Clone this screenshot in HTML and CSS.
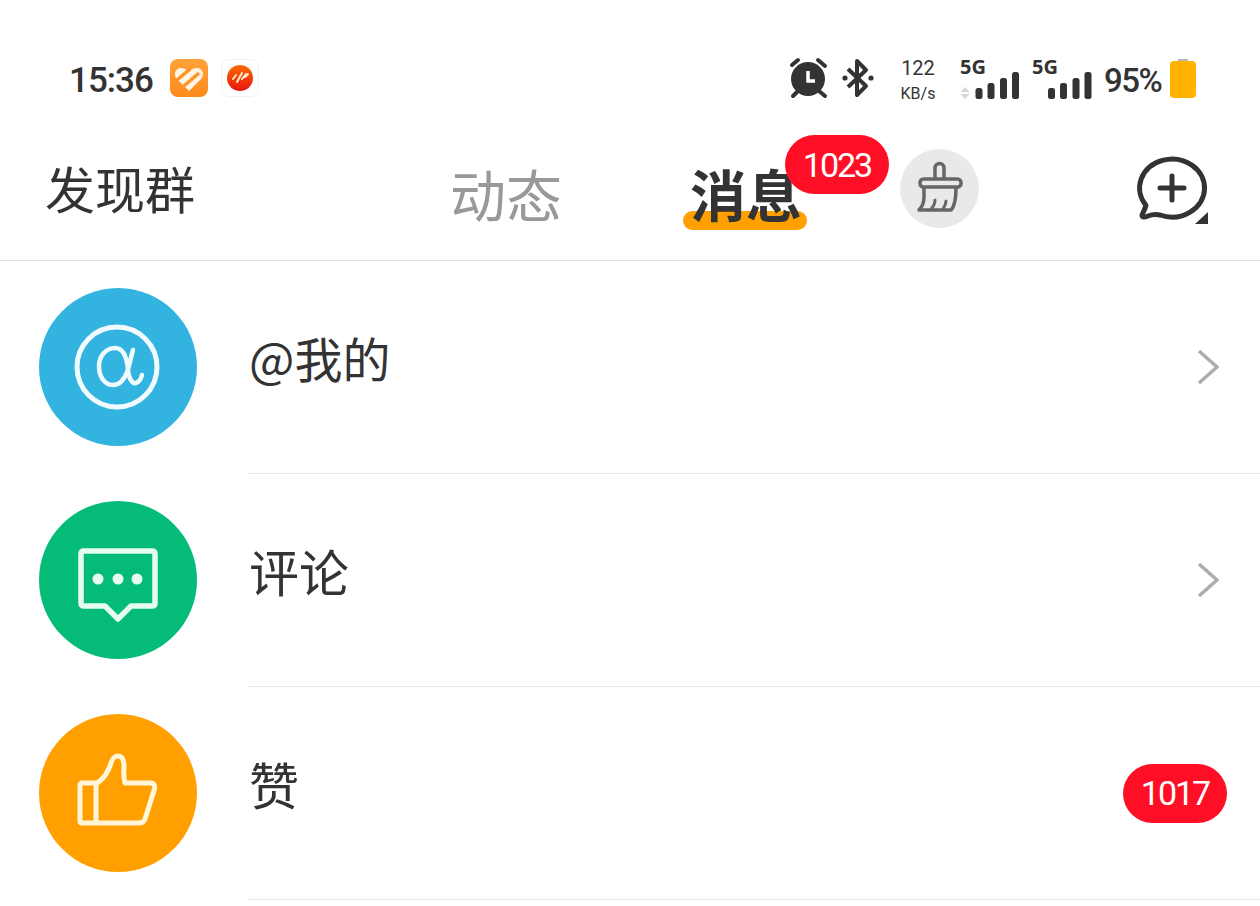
FILE: index.html
```html
<!DOCTYPE html>
<html lang="zh-CN">
<head>
    <meta charset="UTF-8">
    <meta name="viewport" content="width=device-width, initial-scale=1.0">
    <title>消息</title>
    <link rel="stylesheet" href="styles.css">
</head>
<body>
    <div class="status-bar">
        <span class="time">15:36</span>
        <div class="app-icon app-orange">
            <svg width="38" height="38" viewBox="0 0 38 38">
                <path d="M19 32 L7 20 C3 16 5 9 11 9 C14 9 17 10 19 13 C21 10 24 9 27 9 C33 9 35 16 31 20 Z" fill="#fff3e4"/>
                <path d="M7 21 L20 10 M14 27 L29 14" stroke="#ff9426" stroke-width="3.5" fill="none"/>
            </svg>
        </div>
        <div class="app-icon app-white">
            <svg width="36" height="36" viewBox="0 0 36 36">
                <defs>
                    <linearGradient id="redBall" x1="0" y1="0" x2="0" y2="1">
                        <stop offset="0" stop-color="#ff6a00"/>
                        <stop offset="1" stop-color="#e8140f"/>
                    </linearGradient>
                </defs>
                <circle cx="18" cy="18" r="13" fill="url(#redBall)"/>
                <path d="M11 19 L14 15 M15 22 L20 13 M20 19 L24 14 M23 17 L26 14" stroke="#ffe9d0" stroke-width="2" stroke-linecap="round" fill="none"/>
            </svg>
        </div>

        <div class="status-right">
            <svg class="alarm" width="40" height="44" viewBox="0 0 40 44">
                <circle cx="19" cy="23" r="17" fill="#333"/>
                <path d="M3 9 L9 4 M29 4 L36 10 M4 40 L9 35 M36 40 L30 35" stroke="#333" stroke-width="4" stroke-linecap="round" fill="none"/>
                <path d="M19 15 V25 H26" stroke="#fff" stroke-width="3.5" fill="none"/>
            </svg>
            <svg class="bluetooth" width="32" height="40" viewBox="0 0 32 40">
                <path d="M6 11 L24 28 L15 37 V3 L24 12 L6 29" stroke="#333" stroke-width="4" stroke-linejoin="round" fill="none"/>
                <circle cx="3" cy="20" r="2.6" fill="#333"/>
                <circle cx="29" cy="20" r="2.6" fill="#333"/>
            </svg>
            <div class="speed">
                <span class="speed-num">122</span>
                <span class="speed-unit">KB/s</span>
            </div>
            <div class="net net-first">
                <span class="net-label">5G</span>
                <svg width="60" height="42" viewBox="0 0 60 42">
                    <path d="M5 29 L9.5 34 H0.5 Z M5 41 L9.5 36 H0.5 Z" fill="#d6d6d6"/>
                    <rect x="15.5" y="30" width="7" height="11" rx="2.5" fill="#333"/>
                    <rect x="27.5" y="25" width="7" height="16" rx="2.5" fill="#333"/>
                    <rect x="40" y="20" width="7" height="21" rx="2.5" fill="#333"/>
                    <rect x="52" y="14" width="7" height="27" rx="2.5" fill="#333"/>
                </svg>
            </div>
            <div class="net">
                <span class="net-label">5G</span>
                <svg width="60" height="42" viewBox="0 0 60 42">
                    <rect x="16" y="30" width="7" height="11" rx="2.5" fill="#333"/>
                    <rect x="28" y="25" width="7" height="16" rx="2.5" fill="#333"/>
                    <rect x="40.5" y="20" width="7" height="21" rx="2.5" fill="#333"/>
                    <rect x="52.5" y="14" width="7" height="27" rx="2.5" fill="#333"/>
                </svg>
            </div>
            <span class="percent">95%</span>
            <div class="battery"><div class="battery-cap"></div><div class="battery-body"></div></div>
        </div>
    </div>

    <div class="header">
        <span class="find-groups">发现群</span>
        <span class="tab">动态</span>
        <span class="tab tab-active">
            消息
            <span class="tab-line"></span>
            <span class="badge tab-badge">1023</span>
        </span>
        <div class="clear-btn">
            <svg width="79" height="79" viewBox="0 0 79 79">
                <path d="M35 30 V19 a4.5 4.5 0 0 1 9 0 V30" stroke="#666" stroke-width="3.5" fill="none"/>
                <rect x="20" y="30" width="41" height="8" rx="3.5" stroke="#666" stroke-width="3.5" fill="none"/>
                <path d="M24 38 V48 C24 54 22 58 19 61 H51 C55 57 56 49 56 38" stroke="#666" stroke-width="3.5" stroke-linejoin="round" fill="none"/>
                <path d="M31 60 C34 57 35 54 35 51 M43 60 C45 57 46 55 46 52" stroke="#666" stroke-width="3" stroke-linecap="round" fill="none"/>
            </svg>
        </div>
        <svg class="add-btn" width="80" height="80" viewBox="0 0 80 80">
            <path d="M16 55.4 A32.5 29 0 1 1 30 65 Q24 63.5 18 66 Q12 68.5 12 65 Q14.5 60 16 55.4 Z" stroke="#333" stroke-width="5" stroke-linejoin="round" fill="none"/>
            <path d="M42 26 V50 M30 38 H54" stroke="#333" stroke-width="5" stroke-linecap="round" fill="none"/>
            <path d="M65 74 H78 V62 Z" fill="#333"/>
        </svg>
    </div>

    <div class="list">
        <div class="row">
            <svg class="avatar" width="158" height="158" viewBox="0 0 158 158">
                <circle cx="79" cy="79" r="79" fill="#33b4e0"/>
                <circle cx="78" cy="79" r="40" stroke="#effbff" stroke-width="5" fill="none"/>
                <path d="M94 62 C91 72 90 80 88 84 C85 92 81 97 74 97 C65 97 60 88 60 78 C60 68 67 60 76 60 C85 60 88 70 89 82 C90 92 94 96 97 95 C100 94 102 91 103 87" stroke="#effbff" stroke-width="4.5" stroke-linecap="round" fill="none"/>
            </svg>
            <div class="row-body">
                <span class="row-title row-title-mine">@我的</span>
                <svg class="chevron" width="22" height="36" viewBox="0 0 22 36">
                    <path d="M2 2 L20 18 L2 34" stroke="#adadad" stroke-width="3.5" fill="none"/>
                </svg>
            </div>
        </div>
        <div class="row">
            <svg class="avatar" width="158" height="158" viewBox="0 0 158 158">
                <circle cx="79" cy="79" r="79" fill="#05bb78"/>
                <path d="M44 50 H113 Q116 50 116 53 V102 Q116 105 113 105 H92 L79 118 L66 105 H45 Q42 105 42 102 V53 Q42 50 45 50 Z" stroke="#e6fbf2" stroke-width="5.5" stroke-linejoin="round" fill="none"/>
                <circle cx="59" cy="78" r="5.5" fill="#e6fbf2"/>
                <circle cx="79" cy="78" r="5.5" fill="#e6fbf2"/>
                <circle cx="98" cy="78" r="5.5" fill="#e6fbf2"/>
            </svg>
            <div class="row-body">
                <span class="row-title">评论</span>
                <svg class="chevron" width="22" height="36" viewBox="0 0 22 36">
                    <path d="M2 2 L20 18 L2 34" stroke="#adadad" stroke-width="3.5" fill="none"/>
                </svg>
            </div>
        </div>
        <div class="row">
            <svg class="avatar" width="158" height="158" viewBox="0 0 158 158">
                <circle cx="79" cy="79" r="79" fill="#ffa000"/>
                <path d="M57 70 C66 64 70 56 72 49 C74 43 76 42 79 42 C83 42 85 46 85 52 C85 58 84 63 86 69 H112 C115 69 116 72 115.5 75 L106 105 C105 108 103 109 100 109 H43 C41 109 41 108 41 107 V72 C41 70 42 69 43 69 H57 V109" stroke="#fff6d8" stroke-width="5" stroke-linejoin="round" fill="none"/>
            </svg>
            <div class="row-body">
                <span class="row-title">赞</span>
                <span class="badge">1017</span>
            </div>
        </div>
    </div>
</body>
</html>
```

FILE: styles.css
```css
body {
    margin: 0;
    background: #ffffff;
    color: #333333;
    font-family: "Noto Sans CJK SC", "Noto Sans", sans-serif;
    overflow: hidden;
}

/* status bar */
.status-bar {
    display: flex;
    align-items: center;
    box-sizing: border-box;
    height: 126px;
    padding: 30px 64px 0 69px;
}

.time {
    width: 85px;
    margin-top: 4px;
    font-family: Roboto, sans-serif;
    font-size: 35px;
    font-weight: 500;
    letter-spacing: -1px;
}

.app-icon {
    width: 38px;
    height: 38px;
    border-radius: 8px;
    box-sizing: border-box;
}

.app-orange {
    margin-left: 16px;
    background: linear-gradient(#ffa23a, #ff8a1c);
}

.app-white {
    margin-left: 13px;
    border: 1px solid #f2f2f2;
}

.status-right {
    display: flex;
    align-items: center;
    margin-left: auto;
}

.bluetooth {
    margin-left: 13px;
}

.speed {
    display: flex;
    flex-direction: column;
    align-items: center;
    width: 36px;
    margin-left: 26px;
    padding-top: 5px;
    font-family: Roboto, sans-serif;
    line-height: 25px;
}

.speed-num {
    font-size: 20px;
}

.speed-unit {
    font-size: 16px;
}

.net {
    position: relative;
    width: 60px;
    height: 42px;
    margin-top: 2px;
    margin-left: 12px;
}

.net-first {
    margin-left: 24px;
}

.net svg {
    display: block;
}

.net-label {
    position: absolute;
    top: -5px;
    left: 0;
    font-family: "Noto Sans", sans-serif;
    font-size: 20px;
    font-weight: 700;
    line-height: 28px;
}

.percent {
    width: 56px;
    margin-top: 4px;
    margin-left: 12px;
    font-family: Roboto, sans-serif;
    font-size: 33px;
    font-weight: 500;
    letter-spacing: -1.5px;
    white-space: nowrap;
}

.battery {
    width: 26px;
    margin-left: 10px;
}

.battery-cap {
    width: 10px;
    height: 2px;
    margin: 0 auto;
    background: #b8b8b8;
}

.battery-body {
    height: 37px;
    border-radius: 4px;
    background: #ffb300;
}

/* top tabs */
.header {
    display: flex;
    align-items: center;
    box-sizing: border-box;
    height: 135px;
    padding-left: 45px;
    border-bottom: 1px solid #e2e2e2;
}

.find-groups {
    width: 152px;
    margin-bottom: 12px;
    font-size: 50px;
    line-height: 60px;
    white-space: nowrap;
}

.tab {
    position: relative;
    z-index: 0;
    width: 108px;
    margin-left: 253px;
    font-size: 56px;
    line-height: 60px;
    color: #999999;
    white-space: nowrap;
}

.tab-active {
    width: 110px;
    margin-left: 132px;
    color: #333333;
    font-weight: 700;
}

.tab-line {
    position: absolute;
    z-index: -1;
    top: 48px;
    left: -7px;
    width: 124px;
    height: 19px;
    border-radius: 10px;
    background: #ffa000;
}

.badge {
    display: flex;
    align-items: center;
    justify-content: center;
    width: 104px;
    height: 59px;
    border-radius: 30px;
    background: #ff0f26;
    color: #ffffff;
    font-family: Roboto, sans-serif;
    font-size: 34px;
    font-weight: 400;
    letter-spacing: -2px;
}

.tab-badge {
    position: absolute;
    top: -28px;
    left: 95px;
}

.clear-btn {
    width: 79px;
    height: 79px;
    margin-left: 100px;
    margin-bottom: 9px;
    border-radius: 50%;
    background: #e9e9e9;
}

.add-btn {
    margin-left: 151px;
    margin-bottom: 6px;
}

/* message rows */
.row {
    display: flex;
    align-items: center;
    padding-left: 39px;
}

.avatar {
    flex-shrink: 0;
    margin-bottom: 2px;
}

.row-body {
    display: flex;
    flex: 1;
    align-items: center;
    justify-content: space-between;
    box-sizing: border-box;
    height: 213px;
    margin-left: 52px;
    padding-right: 33px;
    border-bottom: 1px solid #e6e6e6;
}

.row-title {
    margin-bottom: 20px;
    font-size: 50px;
    line-height: 60px;
}

.row-title-mine {
    font-size: 48px;
}

.chevron {
    margin-right: 8px;
}
```
